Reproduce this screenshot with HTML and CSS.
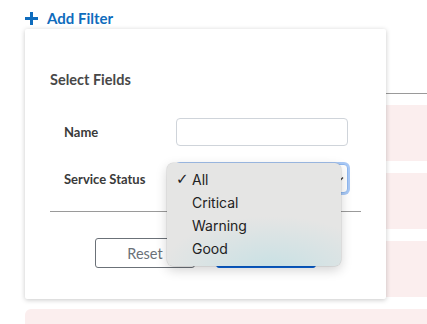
FILE: index.html
```html
<!DOCTYPE html>
<html lang="en">
<head>
<meta charset="utf-8">
<title>Add Filter</title>
<link rel="stylesheet" href="styles.css">
</head>
<body>
<div class="page">
  <div class="toolbar">
    <button class="add-filter" type="button">
      <svg class="plus" width="13" height="13" viewBox="0 0 13 13" aria-hidden="true"><path d="M6.5 0v13M0 6.5h13" stroke="currentColor" stroke-width="3"/></svg>
      <span>Add Filter</span>
    </button>
  </div>

  <div class="content">
    <div class="table-head"></div>
    <div class="rows">
      <div class="row"></div>
      <div class="row"></div>
      <div class="row"></div>
      <div class="row"></div>
    </div>
  </div>

  <div class="popover">
    <div class="popover-title">Select Fields</div>
    <div class="field-grid">
      <label class="field-label">Name</label>
      <div class="text-input"></div>
      <label class="field-label">Service Status</label>
      <div class="select-input">
        <svg class="chevron" width="8" height="6" viewBox="0 0 8 6" aria-hidden="true"><path d="M1 1.5l3 3 3-3" fill="none" stroke="#444" stroke-width="1.4"/></svg>
      </div>
    </div>
    <div class="divider"></div>
    <div class="actions">
      <button class="btn btn-reset" type="button">Reset</button>
      <button class="btn btn-apply" type="button">Apply</button>
    </div>

    <ul class="dropdown">
      <li class="option selected"><span class="check">✓</span>All</li>
      <li class="option">Critical</li>
      <li class="option">Warning</li>
      <li class="option">Good</li>
    </ul>
  </div>
</div>
</body>
</html>
```

FILE: styles.css
```css
* { box-sizing: border-box; }

html, body {
  margin: 0;
  padding: 0;
  background: #ffffff;
  overflow: hidden;
}

body {
  font-family: Lato, "Open Sans", "Liberation Sans", sans-serif;
  color: #333;
}

.page {
  position: relative;
  width: 427px;
  height: 324px;
  overflow: hidden;
}

.toolbar {
  height: 29px;
  padding-left: 25px;
  display: flex;
  align-items: flex-start;
}

.add-filter {
  margin-top: 9px;
  display: flex;
  align-items: center;
  gap: 9px;
  padding: 0;
  border: 0;
  background: none;
  color: #0f6cbd;
  font-family: Lato, "Open Sans", sans-serif;
  font-weight: 700;
  font-size: 15px;
  line-height: 18px;
  cursor: pointer;
}

.plus { display: block; }

.content {
  padding-left: 25px;
}

.table-head {
  height: 65px;
  border-bottom: 1px solid #9a9a9a;
  width: 500px;
}

.rows {
  margin-top: 11px;
  display: flex;
  flex-direction: column;
  gap: 12px;
}

.row {
  width: 500px;
  height: 56px;
  background: #fbeeee;
  border-radius: 6px;
}

.popover {
  position: absolute;
  left: 25px;
  top: 29px;
  width: 361px;
  background: #fff;
  border-radius: 2px;
  box-shadow: 0 1px 5px rgba(0, 0, 0, 0.22);
  padding: 41px 25px 31px 25px;
}

.popover-title {
  font-size: 14.5px;
  font-weight: 700;
  line-height: 20px;
  color: #484848;
}

.field-grid {
  margin-top: 28px;
  margin-left: 14px;
  display: grid;
  grid-template-columns: 112px 172px;
  row-gap: 18px;
  align-items: center;
}

.field-label {
  font-size: 13px;
  font-weight: 700;
  color: #3a3a3a;
}

.text-input {
  height: 28px;
  border: 1px solid #cfd4da;
  border-radius: 4px;
  background: #fff;
}

.select-input {
  position: relative;
  height: 29px;
  border: 1px solid #8fb8f0;
  border-radius: 4px;
  background: #fff;
  box-shadow: 0 0 0 2px #a9c9f6;
  display: flex;
  align-items: center;
  justify-content: flex-end;
  padding-right: 3px;
}

.chevron { display: block; }

.divider {
  margin-top: 18px;
  height: 1px;
  background: #9a9a9a;
}

.actions {
  margin-top: 26px;
  display: flex;
  justify-content: center;
  gap: 21px;
}

.btn {
  width: 100px;
  height: 30px;
  border-radius: 3px;
  font-family: Lato, "Open Sans", sans-serif;
  font-size: 14.5px;
}

.btn-reset {
  background: #fff;
  border: 1px solid #6b7178;
  color: #6b7178;
}

.btn-apply {
  background: #0b63d6;
  border: 1px solid #0b63d6;
  color: #fff;
}

.dropdown {
  position: absolute;
  left: 142px;
  top: 134px;
  width: 174px;
  height: 103px;
  margin: 0;
  padding: 5px 0 6px 0;
  list-style: none;
  border-radius: 6px;
  background:
    radial-gradient(ellipse 110px 55px at 60% 105%, rgba(196, 224, 228, 0.9), rgba(200, 224, 228, 0) 100%),
    #e5e5e4;
  box-shadow: 0 0 0 0.5px rgba(0, 0, 0, 0.12), 0 4px 12px rgba(0, 0, 0, 0.18);
  font-family: Inter, "Noto Sans", "Liberation Sans", sans-serif;
  font-size: 14px;
  color: #222;
}

.option {
  position: relative;
  height: 23px;
  line-height: 23px;
  padding-left: 25px;
}

.check {
  position: absolute;
  left: 9px;
  top: 0;
  font-size: 15px;
  font-family: "DejaVu Sans", sans-serif;
}
```
